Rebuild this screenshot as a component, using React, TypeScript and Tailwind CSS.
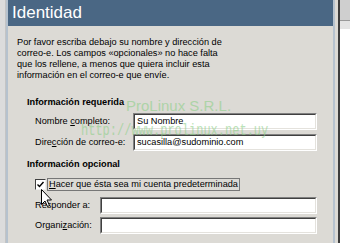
import React from "react";

const font = "font-['Liberation_Sans',Arial,sans-serif]";

function Field({ value }: { value?: string }) {
  return (
    <div className="flex-1 h-[17px] border-t border-l border-t-[#808080] border-l-[#808080] border-b border-r border-b-white border-r-white">
      <div className="h-full bg-white border-t border-l border-t-[#404040] border-l-[#404040] border-b border-r border-b-[#e4e2dd] border-r-[#e4e2dd] pl-[2px] text-[9.2px] leading-[13px] text-black">
        {value}
      </div>
    </div>
  );
}

export default function App() {
  return (
    <div className={`w-[350px] h-[243px] flex overflow-hidden bg-[#dcdad5] ${font}`}>
      <div className="w-[5px] bg-[#dcdcdc]" />
      <div className="w-[1px] bg-[#c4c4c4]" />
      <div className="w-[2px] bg-[#b6c2ce]" />
      <div className="relative w-[325px] flex flex-col bg-[#dcdad5]">
        <div className="h-[26px] bg-[#4a6784] pl-[4px] text-[17px] leading-[26px] text-white">
          Identidad
        </div>
        <div className="pl-[9px] pt-[11px] text-[9.2px] leading-[11px] text-black">
          <p>Por favor escriba debajo su nombre y dirección de</p>
          <p>correo-e. Los campos «opcionales» no hace falta</p>
          <p>que los rellene, a menos que quiera incluir esta</p>
          <p>información en el correo-e que envíe.</p>
        </div>
        <div className="pl-[19px] pr-[16px] mt-[16px] text-[9.2px] leading-[11px] text-black">
          <div className="font-bold">Información requerida</div>
          <div className="pl-[8px] mt-[5px] flex flex-col gap-[4px]">
            <div className="flex items-center">
              <span className="w-[98px]">
                Nombre <span className="underline">c</span>ompleto:
              </span>
              <Field value="Su Nombre" />
            </div>
            <div className="flex items-center">
              <span className="w-[98px]">
                Dire<span className="underline">c</span>ción de correo-e:
              </span>
              <Field value="sucasilla@sudominio.com" />
            </div>
          </div>
          <div className="font-bold mt-[8px]">Información opcional</div>
          <div className="pl-[8px] mt-[8px] flex items-center gap-[1px]">
            <div className="w-[11px] h-[11px] bg-white border border-t-[#404040] border-l-[#404040] border-b-[#f0f0f0] border-r-[#f0f0f0] flex items-center justify-center">
              <svg width="9" height="9" viewBox="0 0 9 9">
                <path d="M1.5 4.5 L3.5 6.5 L7.5 2" stroke="#000" strokeWidth="1.4" fill="none" />
              </svg>
            </div>
            <div className="h-[13px] border border-[#777] px-[1px] leading-[11px]">
              <span className="underline">H</span>acer que ésta sea mi cuenta predeterminada
            </div>
          </div>
          <div className="pl-[8px] mt-[6px] flex flex-col gap-[3px]">
            <div className="flex items-center">
              <span className="w-[65px]">Responder a:</span>
              <Field />
            </div>
            <div className="flex items-center">
              <span className="w-[65px]">
                Organi<span className="underline">z</span>ación:
              </span>
              <Field />
            </div>
          </div>
        </div>
        <div className="absolute left-[118px] top-[97px] text-[15px] leading-[18px] text-[#8fd08a] opacity-60 pointer-events-none">
          ProLinux S.R.L.
        </div>
        <div className="absolute left-[73px] top-[122px] text-[12px] leading-[18px] font-['Liberation_Mono',monospace] text-[#8fd08a] opacity-60 pointer-events-none scale-y-[1.3]">
          http://www.prolinux.net.uy
        </div>
        <svg className="absolute left-[33px] top-[189px]" width="12" height="19" viewBox="0 0 12 19">
          <path d="M0.5 0.5 L0.5 15.5 L4 12 L6.5 17.5 L8.5 16.5 L6 11 L10.5 11 Z" fill="#fff" stroke="#000" strokeWidth="1" />
        </svg>
      </div>
      <div className="w-[2px] bg-[#b6c2ce]" />
      <div className="w-[3px] bg-[#dcdad5]" />
      <div className="w-[2px] bg-[#3c3c3c]" />
      <div className="flex-1 flex flex-col">
        <div className="h-[20px] bg-[#cfcfcf]" />
        <div className="h-[1px] bg-[#9a9a9a]" />
        <div className="h-[8px] bg-[#e4e4e4]" />
        <div className="flex-1 bg-white" />
      </div>
    </div>
  );
}
